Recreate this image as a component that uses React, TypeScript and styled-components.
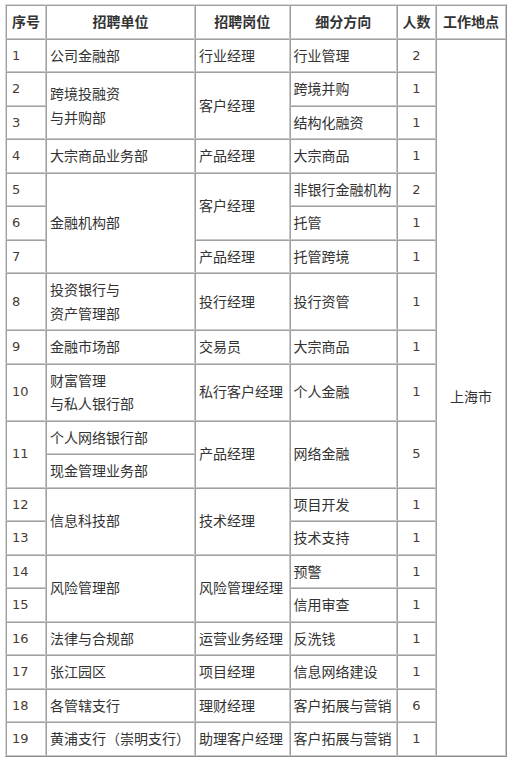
import React from "react";
import styled, { createGlobalStyle } from "styled-components";

const Global = createGlobalStyle`
  html, body { margin: 0; padding: 0; background: #ffffff; }
  body { font-family: "Noto Sans CJK SC", "Liberation Sans", sans-serif; color: #333333; }
`;

const Page = styled.div`
  padding: 4px 5px;
`;

const Table = styled.table`
  border-collapse: separate;
  border-spacing: 0;
  table-layout: fixed;
  width: 502px;
  border: 1px solid;
  border-color: #d6d6d6 #8c8c8c #8c8c8c #d6d6d6;
  font-size: 14px;
  line-height: 23.5px;
`;

const HeadCell = styled.th`
  border: 1px solid;
  border-color: #a0a0a0 #c8c8c8 #c8c8c8 #a0a0a0;
  padding: 4px 2px;
  font-weight: 700;
  text-align: center;
  white-space: nowrap;
  color: #333333;
`;

const Cell = styled.td<{ $align?: "left" | "center"; $num?: boolean }>`
  border: 1px solid;
  border-color: #a0a0a0 #c8c8c8 #c8c8c8 #a0a0a0;
  padding: 4px ${(p) => (p.$num && p.$align !== "center" ? "5px" : "3px")};
  text-align: ${(p) => p.$align ?? "left"};
  vertical-align: middle;
  white-space: nowrap;
  font-family: ${(p) =>
    p.$num ? '"DejaVu Sans", "Liberation Sans", sans-serif' : '"Noto Sans CJK SC", sans-serif'};
  font-size: ${(p) => (p.$num ? "13px" : "14px")};
  color: ${(p) => (p.$num ? "#4a3a34" : "#333333")};
`;

type Row = {
  no?: { v: string; rs?: number };
  unit?: { v: string[]; rs?: number };
  post?: { v: string; rs?: number };
  dir?: { v: string; rs?: number };
  cnt?: { v: string; rs?: number };
};

const rows: Row[] = [
  { no: { v: "1" }, unit: { v: ["公司金融部"] }, post: { v: "行业经理" }, dir: { v: "行业管理" }, cnt: { v: "2" } },
  { no: { v: "2" }, unit: { v: ["跨境投融资", "与并购部"], rs: 2 }, post: { v: "客户经理", rs: 2 }, dir: { v: "跨境并购" }, cnt: { v: "1" } },
  { no: { v: "3" }, dir: { v: "结构化融资" }, cnt: { v: "1" } },
  { no: { v: "4" }, unit: { v: ["大宗商品业务部"] }, post: { v: "产品经理" }, dir: { v: "大宗商品" }, cnt: { v: "1" } },
  { no: { v: "5" }, unit: { v: ["金融机构部"], rs: 3 }, post: { v: "客户经理", rs: 2 }, dir: { v: "非银行金融机构" }, cnt: { v: "2" } },
  { no: { v: "6" }, dir: { v: "托管" }, cnt: { v: "1" } },
  { no: { v: "7" }, post: { v: "产品经理" }, dir: { v: "托管跨境" }, cnt: { v: "1" } },
  { no: { v: "8" }, unit: { v: ["投资银行与", "资产管理部"] }, post: { v: "投行经理" }, dir: { v: "投行资管" }, cnt: { v: "1" } },
  { no: { v: "9" }, unit: { v: ["金融市场部"] }, post: { v: "交易员" }, dir: { v: "大宗商品" }, cnt: { v: "1" } },
  { no: { v: "10" }, unit: { v: ["财富管理", "与私人银行部"] }, post: { v: "私行客户经理" }, dir: { v: "个人金融" }, cnt: { v: "1" } },
  { no: { v: "11", rs: 2 }, unit: { v: ["个人网络银行部"] }, post: { v: "产品经理", rs: 2 }, dir: { v: "网络金融", rs: 2 }, cnt: { v: "5", rs: 2 } },
  { unit: { v: ["现金管理业务部"] } },
  { no: { v: "12" }, unit: { v: ["信息科技部"], rs: 2 }, post: { v: "技术经理", rs: 2 }, dir: { v: "项目开发" }, cnt: { v: "1" } },
  { no: { v: "13" }, dir: { v: "技术支持" }, cnt: { v: "1" } },
  { no: { v: "14" }, unit: { v: ["风险管理部"], rs: 2 }, post: { v: "风险管理经理", rs: 2 }, dir: { v: "预警" }, cnt: { v: "1" } },
  { no: { v: "15" }, dir: { v: "信用审查" }, cnt: { v: "1" } },
  { no: { v: "16" }, unit: { v: ["法律与合规部"] }, post: { v: "运营业务经理" }, dir: { v: "反洗钱" }, cnt: { v: "1" } },
  { no: { v: "17" }, unit: { v: ["张江园区"] }, post: { v: "项目经理" }, dir: { v: "信息网络建设" }, cnt: { v: "1" } },
  { no: { v: "18" }, unit: { v: ["各管辖支行"] }, post: { v: "理财经理" }, dir: { v: "客户拓展与营销" }, cnt: { v: "6" } },
  { no: { v: "19" }, unit: { v: ["黄浦支行（崇明支行）"] }, post: { v: "助理客户经理" }, dir: { v: "客户拓展与营销" }, cnt: { v: "1" } },
];

export default function App() {
  return (
    <Page>
      <Global />
      <Table>
        <colgroup>
          <col style={{ width: 40 }} />
          <col style={{ width: 149 }} />
          <col style={{ width: 94.5 }} />
          <col style={{ width: 107.5 }} />
          <col style={{ width: 39 }} />
          <col style={{ width: 70 }} />
        </colgroup>
        <thead>
          <tr>
            <HeadCell>序号</HeadCell>
            <HeadCell>招聘单位</HeadCell>
            <HeadCell>招聘岗位</HeadCell>
            <HeadCell>细分方向</HeadCell>
            <HeadCell>人数</HeadCell>
            <HeadCell>工作地点</HeadCell>
          </tr>
        </thead>
        <tbody>
          {rows.map((r, i) => (
            <tr key={i}>
              {r.no && (
                <Cell $num rowSpan={r.no.rs}>
                  {r.no.v}
                </Cell>
              )}
              {r.unit && (
                <Cell rowSpan={r.unit.rs}>
                  {r.unit.v.map((line, j) => (
                    <React.Fragment key={j}>
                      {j > 0 && <br />}
                      {line}
                    </React.Fragment>
                  ))}
                </Cell>
              )}
              {r.post && <Cell rowSpan={r.post.rs}>{r.post.v}</Cell>}
              {r.dir && <Cell rowSpan={r.dir.rs}>{r.dir.v}</Cell>}
              {r.cnt && (
                <Cell $num $align="center" rowSpan={r.cnt.rs}>
                  {r.cnt.v}
                </Cell>
              )}
              {i === 0 && (
                <Cell $align="center" rowSpan={rows.length}>
                  上海市
                </Cell>
              )}
            </tr>
          ))}
        </tbody>
      </Table>
    </Page>
  );
}
